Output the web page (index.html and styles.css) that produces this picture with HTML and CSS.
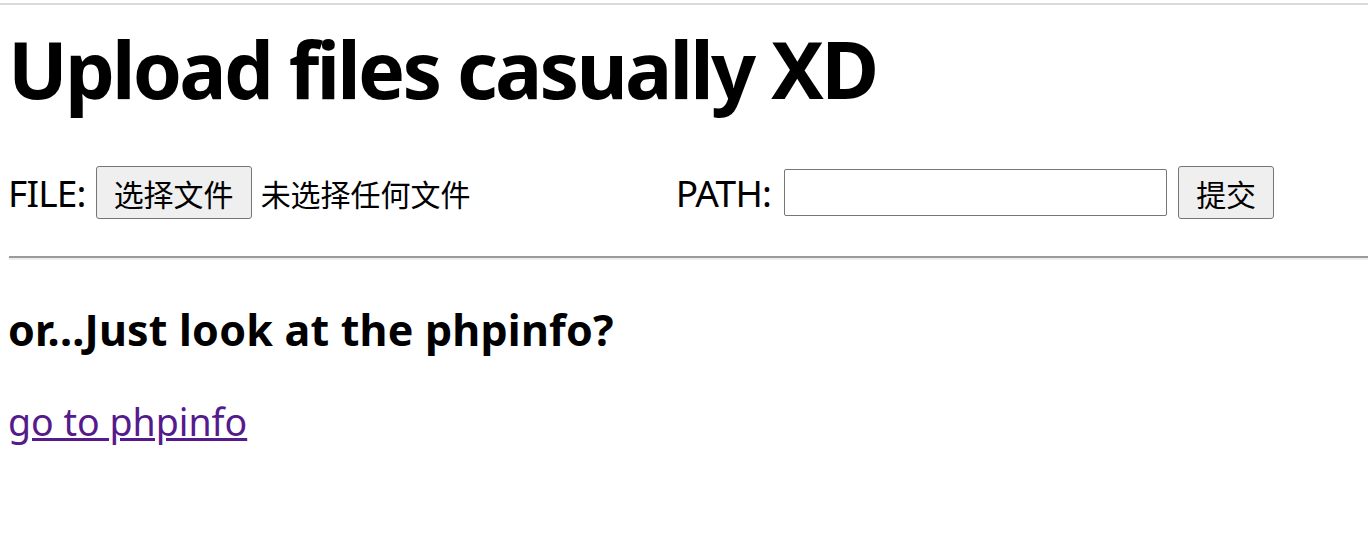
FILE: index.html
```html
<!DOCTYPE html>
<html lang="zh-CN">
<head>
<meta charset="utf-8">
<title>Upload files casually XD</title>
<link rel="stylesheet" href="styles.css">
</head>
<body>
<div class="topline"></div>
<main class="page">
  <h1 class="title">Upload files casually XD</h1>
  <form class="upload">
    <div class="field">
      <span class="label">FILE:</span>
      <button type="button" class="btn">选择文件</button>
      <span class="nofile">未选择任何文件</span>
    </div>
    <div class="field path">
      <span class="label label-path">PATH:</span>
      <input type="text" class="path-input">
      <button type="button" class="btn">提交</button>
    </div>
  </form>
  <hr class="rule">
  <h3 class="sub">or...Just look at the phpinfo?</h3>
  <a class="link" href="#">go to phpinfo</a>
</main>
</body>
</html>
```
FILE: styles.css
```css
html, body {
  margin: 0;
  padding: 0;
  background: #ffffff;
}
body {
  font-family: "Noto Sans", "Noto Sans CJK SC", sans-serif;
  color: #000;
}
.topline {
  margin-top: 3px;
  height: 2px;
  background: #dadada;
}
.page {
  padding-left: 8px;
}
.title {
  margin: 14px 0 0 0;
  font-size: 79px;
  line-height: 100px;
  letter-spacing: -2.8px;
  font-weight: 700;
}
.upload {
  margin-top: 47px;
  display: flex;
  align-items: center;
  height: 53px;
}
.field {
  display: flex;
  align-items: center;
}
.path {
  margin-left: 205px;
}
.label {
  font-size: 37px;
  line-height: 53px;
  letter-spacing: -0.8px;
  margin-right: 10px;
}
.label-path {
  margin-right: 13px;
}
.btn {
  font-family: "Noto Sans CJK SC", sans-serif;
  font-size: 30px;
  height: 53px;
  padding: 0 17px;
  background: #efefef;
  border: 1px solid #767676;
  border-radius: 3px;
  color: #000;
}
.nofile {
  font-family: "Noto Sans CJK SC", sans-serif;
  font-size: 30px;
  margin-left: 9px;
}
.path-input {
  width: 383px;
  height: 47px;
  box-sizing: border-box;
  border: 1px solid #767676;
  border-radius: 2px;
  padding: 0 4px;
  font-size: 30px;
  margin-right: 11px;
}
.rule {
  margin: 37px 0 0 1px;
  height: 0;
  border: none;
  border-top: 2px solid #9a9a9a;
  border-bottom: 2px solid #eeeeee;
}
.sub {
  margin: 45px 0 0 0;
  font-size: 43px;
  line-height: 50px;
  letter-spacing: 0.2px;
  font-weight: 700;
}
.link {
  display: inline-block;
  margin-top: 42px;
  font-size: 37.5px;
  line-height: 50px;
  color: #551a8b;
}
```
